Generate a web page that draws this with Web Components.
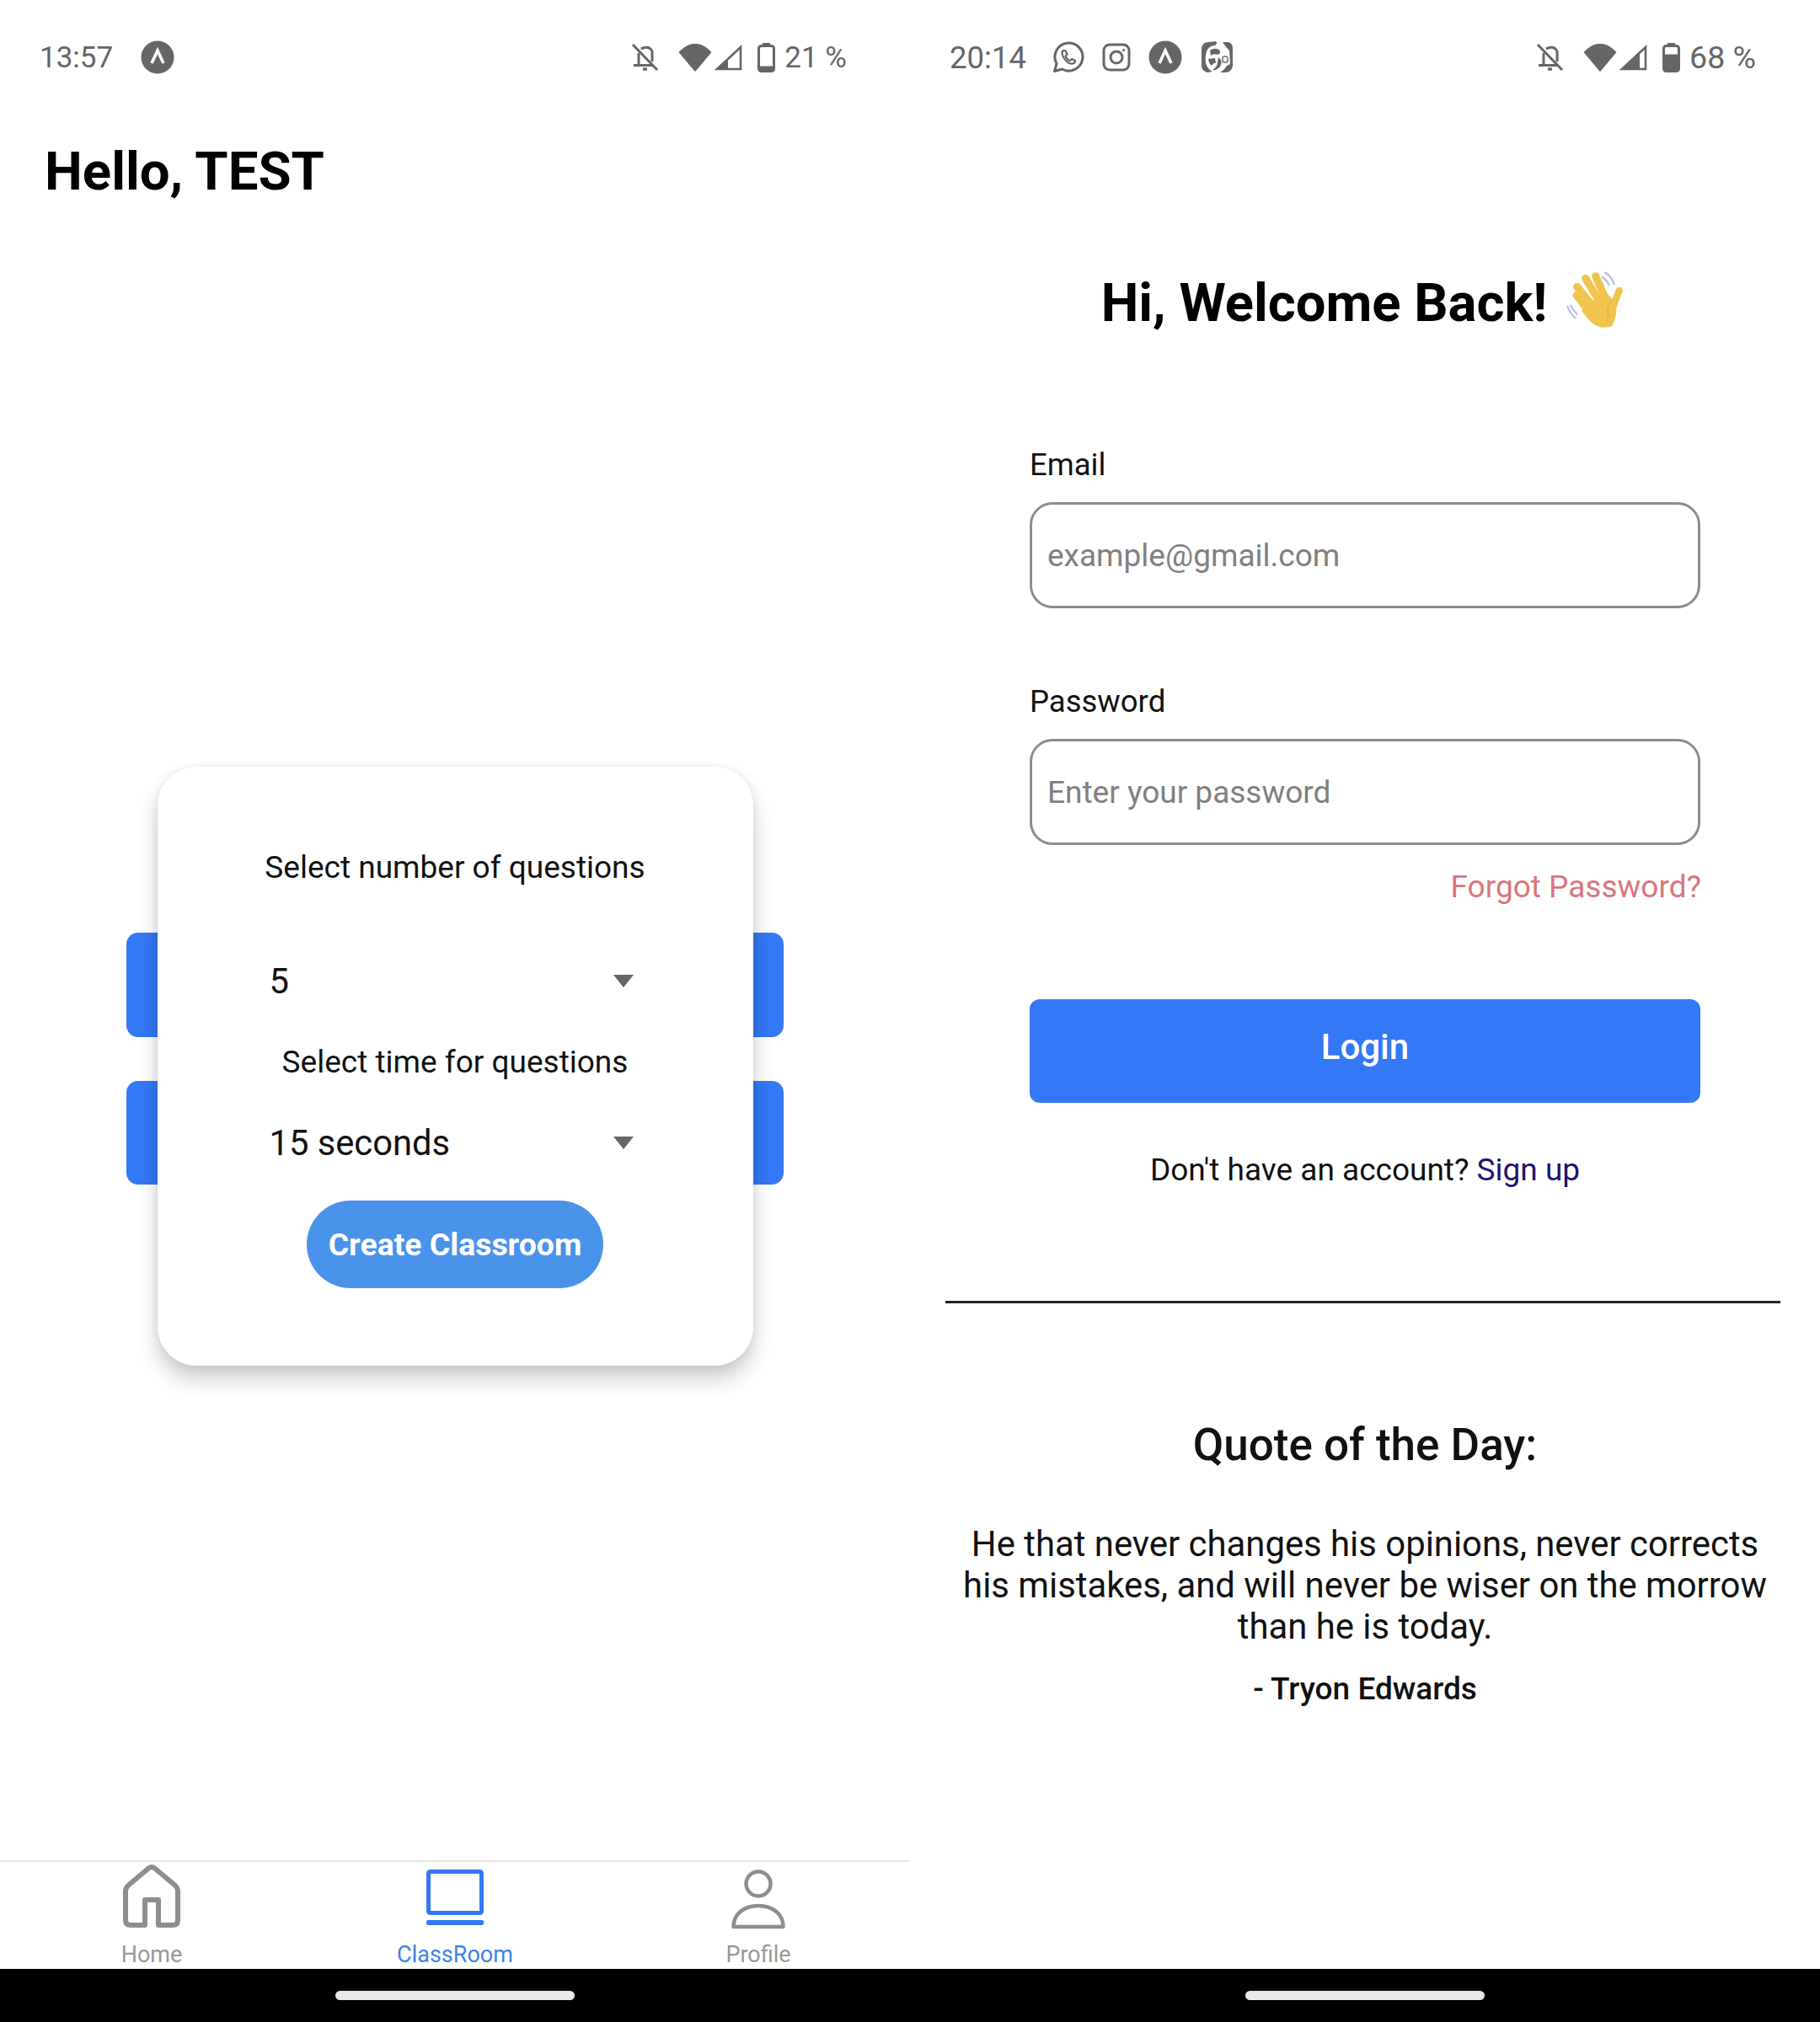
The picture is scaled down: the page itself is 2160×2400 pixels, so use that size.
<!DOCTYPE html>
<html>
<head>
<meta charset="utf-8">
<title>Classroom</title>
<style>
  html, body { margin: 0; padding: 0; background: #fff; }
  body { width: 2160px; height: 2400px; overflow: hidden; font-family: Roboto, "Liberation Sans", sans-serif; }
  .phones { display: grid; grid-template-columns: 1080px 1080px; height: 2400px; }
</style>
</head>
<body>
<div class="phones">
  <classroom-screen>
    <status-bar slot="status" time="13:57" level="21" signal="16" size="35" time-size="35" time-gap="12" edge="75">
      <notif-icon name="app"></notif-icon>
    </status-bar>
    <screen-title slot="title">Hello, TEST</screen-title>
    <nav-bar slot="tabs"></nav-bar>
  </classroom-screen>
  <login-screen>
    <status-bar slot="status" time="20:14" level="68" signal="24" size="37.5" time-size="36.5" time-gap="10" edge="76">
      <notif-icon name="whatsapp"></notif-icon>
      <notif-icon name="instagram"></notif-icon>
      <notif-icon name="app"></notif-icon>
      <notif-icon name="face"></notif-icon>
    </status-bar>
  </login-screen>
</div>

<script>
// icons for the status bar notifications
const NOTIF_ICONS = {
  app: `<svg width="40" height="40" viewBox="0 0 40 40"><circle cx="20" cy="20" r="19.5" fill="#666"/><path d="M13 27 L20 12 L27 27" fill="none" stroke="#fff" stroke-width="3.6"/></svg>`,
  whatsapp: `<svg width="38" height="38" viewBox="0 0 38 38" fill="none" stroke="#666" stroke-width="3"><path d="M2.5 35.5 L5 26.5 A16.5 16.5 0 1 1 11.5 33 Z" stroke-linejoin="round"/><path d="M12.5 11 C11 13 11 16 14 20.5 C17 25 21 27 24.5 26.5 C26.5 26 27 24.5 27 23 L23 21 L21 23 C19 22.5 16.5 20 15.5 17.5 L17.5 15.5 L15.5 11 Z" stroke-width="2.2" stroke-linejoin="round"/></svg>`,
  instagram: `<svg width="34" height="34" viewBox="0 0 34 34" fill="none" stroke="#666" stroke-width="3"><rect x="2" y="2" width="30" height="30" rx="7"/><circle cx="17" cy="17" r="7"/><circle cx="25.5" cy="8.5" r="1.6" fill="#666" stroke="none"/></svg>`,
  face: `<svg width="40" height="40" viewBox="0 0 40 40" fill="#666"><path d="M2 9 Q3 2 10 2 L19 1 Q22 4 17 6 Q10 7 8 13 Q6 19 7 27 Q9 34 15 37 L9 38 Q2 36 2 30 Z"/><path d="M12 12 Q17 8 23 11 Q26 15 21 17 Q16 15 13 18 Z"/><path d="M10 22 L18 21 L19 27 Q16 26 14 30 Q11 28 10 22 Z"/><path d="M22 20 Q28 24 24 31 Q20 36 15 35 Q21 31 21 26 Z"/><path d="M27 2 L34 2 Q39 3 39 10 L39 30 Q38 37 31 38 L24 38 Q30 34 32 30 L36 28 L35 12 Q31 8 27 2 Z"/><rect x="27" y="19" width="6" height="7" rx="2" fill="none" stroke="#666" stroke-width="1.4"/></svg>`
};

class NotifIcon extends HTMLElement {
  constructor() {
    super();
    this.attachShadow({ mode: 'open' });
    this.shadowRoot.innerHTML = `
      <style>
        :host { display: flex; align-items: center; }
        svg { display: block; }
      </style>
      ${NOTIF_ICONS[this.getAttribute('name')] || ''}
    `;
  }
}

class StatusBar extends HTMLElement {
  constructor() {
    super();
    this.attachShadow({ mode: 'open' });
    const time = this.getAttribute('time');
    const level = Number(this.getAttribute('level'));
    const signal = Number(this.getAttribute('signal'));
    const size = this.getAttribute('size');
    const timeSize = this.getAttribute('time-size');
    const timeGap = this.getAttribute('time-gap');
    const edge = this.getAttribute('edge');
    const fillHeight = Math.round(29 * level / 100);
    this.shadowRoot.innerHTML = `
      <style>
        :host {
          display: flex;
          align-items: center;
          justify-content: space-between;
          height: 136px;
          padding: 0 ${edge}px 0 47px;
          box-sizing: border-box;
          color: #666;
          font-family: Roboto, "Liberation Sans", sans-serif;
          font-size: ${size}px;
        }
        .left, .right { display: flex; align-items: center; }
        .left { gap: 21px; }
        .time { margin-right: ${timeGap}px; font-size: ${timeSize}px; }
        .bell { margin-right: 23px; }
        .wifi { margin-right: 3px; }
        .signal { margin-right: 18px; }
        .battery { margin-right: 11px; }
        svg { display: block; }
      </style>
      <div class="left">
        <span class="time">${time}</span>
        <slot></slot>
      </div>
      <div class="right">
        <svg class="bell" width="33" height="34" viewBox="0 0 33 34" fill="none" stroke="#666" stroke-width="3">
          <path d="M2 2 L31 32"/>
          <path d="M9 12 V25 M3 26.5 H25"/>
          <path d="M13 6.5 Q22 3 25 10 V21" stroke-linecap="round"/>
          <path d="M14 31 H19" stroke-width="3.4"/>
        </svg>
        <svg class="wifi" width="40" height="33" viewBox="0 0 40 33"><path d="M1.5 10 Q20 -9 38.5 10 L20 32 Z" fill="#666" stroke="#666" stroke-width="1.5" stroke-linejoin="round"/></svg>
        <svg class="signal" width="33" height="31" viewBox="0 0 33 31">
          <path d="M1 30 L${signal} ${Math.round(30 - (signal - 1) * 0.94)} V30 Z" fill="#666"/>
          <path d="M3 29 L31 3 V29 Z" fill="none" stroke="#666" stroke-width="2.6"/>
        </svg>
        <svg class="battery" width="21" height="35" viewBox="0 0 21 35">
          <rect x="6" y="0" width="9" height="4" fill="#666"/>
          <rect x="1.5" y="3.5" width="18" height="30" rx="3" fill="none" stroke="#666" stroke-width="3"/>
          <rect x="1.5" y="${33.5 - fillHeight}" width="18" height="${fillHeight}" rx="2" fill="#666"/>
        </svg>
        <span>${level} %</span>
      </div>
    `;
  }
}

class ScreenTitle extends HTMLElement {
  constructor() {
    super();
    this.attachShadow({ mode: 'open' });
    this.shadowRoot.innerHTML = `
      <style>
        :host {
          display: block;
          margin: 28px 0 0 53px;
          font-family: Roboto, "Liberation Sans", sans-serif;
          font-size: 63.5px;
          line-height: 80px;
          font-weight: 700;
          color: #000;
        }
      </style>
      <slot></slot>
    `;
  }
}

class SelectBox extends HTMLElement {
  constructor() {
    super();
    this.attachShadow({ mode: 'open' });
    this.shadowRoot.innerHTML = `
      <style>
        :host {
          display: flex;
          align-items: center;
          justify-content: space-between;
          align-self: stretch;
          height: 60px;
          padding: 0 142px 0 133px;
          font-size: 41.7px;
          color: #111;
        }
        .arrow { width: 0; height: 0; border: solid transparent; border-width: 15px 12.5px 0; border-top-color: #666; }
      </style>
      <span><slot></slot></span>
      <span class="arrow"></span>
    `;
  }
}

class ClassroomModal extends HTMLElement {
  constructor() {
    super();
    this.attachShadow({ mode: 'open' });
    this.shadowRoot.innerHTML = `
      <style>
        :host {
          position: absolute;
          left: 186.5px;
          top: 910px;
          width: 707px;
          height: 711px;
          box-sizing: border-box;
          display: flex;
          flex-direction: column;
          align-items: center;
          padding-top: 98px;
          background: #fff;
          border-radius: 46px;
          box-shadow: 0 16px 26px rgba(0, 0, 0, 0.2), 0 0 10px rgba(0, 0, 0, 0.07);
          font-family: Roboto, "Liberation Sans", sans-serif;
        }
        .label { font-size: 37px; line-height: 44px; color: #111; }
        .first { margin-top: 82px; }
        .label.second { margin-top: 45px; }
        select-box.second { margin-top: 43px; }
        .create {
          margin-top: 39px;
          width: 352px;
          height: 104px;
          border-radius: 52px;
          background: #4a93ea;
          color: #fff;
          font-size: 37.4px;
          font-weight: 700;
          display: flex;
          align-items: center;
          justify-content: center;
        }
      </style>
      <div class="label">Select number of questions</div>
      <select-box class="first">5</select-box>
      <div class="label second">Select time for questions</div>
      <select-box class="second">15 seconds</select-box>
      <div class="create">Create Classroom</div>
    `;
  }
}

class NavBar extends HTMLElement {
  constructor() {
    super();
    this.attachShadow({ mode: 'open' });
    this.shadowRoot.innerHTML = `
      <style>
        :host {
          display: grid;
          grid-template-columns: repeat(3, 1fr);
          height: 129px;
          box-sizing: border-box;
          border-top: 2px solid #e8e8e8;
          padding-top: 2px;
          font-family: Roboto, "Liberation Sans", sans-serif;
          font-size: 27px;
          color: #999;
        }
        .tab { display: flex; flex-direction: column; align-items: center; }
        .tab span { line-height: 32px; margin-top: 12px; }
        .active { color: #3f82e8; }
        svg { display: block; }
      </style>
      <div class="tab">
        <svg width="70" height="80" viewBox="0 0 70 80" fill="none" stroke="#8e8e8e" stroke-width="6" stroke-linejoin="round">
          <path d="M27 73 H10 Q4 73 4 67 V33 Q4 29 7 26 L32 5 Q35 3 38 5 L63 26 Q66 29 66 33 V67 Q66 73 60 73 H43 V43 H27 Z"/>
        </svg>
        <span>Home</span>
      </div>
      <div class="tab active">
        <svg width="70" height="80" viewBox="0 0 70 80" fill="none">
          <rect x="3.5" y="9.5" width="63" height="49" rx="2" stroke="#3478f6" stroke-width="5"/>
          <rect x="1" y="67" width="68" height="6" rx="2" fill="#3478f6"/>
        </svg>
        <span>ClassRoom</span>
      </div>
      <div class="tab">
        <svg width="70" height="80" viewBox="0 0 70 80" fill="none" stroke="#8e8e8e" stroke-width="4.5" stroke-linejoin="round">
          <circle cx="35" cy="24" r="14.5"/>
          <path d="M5.5 75 C5.5 59 19 50 35 50 C51 50 64.5 59 64.5 75 Z"/>
        </svg>
        <span>Profile</span>
      </div>
    `;
  }
}

class HomeIndicator extends HTMLElement {
  constructor() {
    super();
    this.attachShadow({ mode: 'open' });
    this.shadowRoot.innerHTML = `
      <style>
        :host {
          display: flex;
          justify-content: center;
          height: 63px;
          padding-top: 26px;
          box-sizing: border-box;
          background: #000;
        }
        div { width: 284px; height: 11px; border-radius: 6px; background: #e8e8e8; }
      </style>
      <div></div>
    `;
  }
}

class ClassroomScreen extends HTMLElement {
  constructor() {
    super();
    this.attachShadow({ mode: 'open' });
    this.shadowRoot.innerHTML = `
      <style>
        :host {
          position: relative;
          display: flex;
          flex-direction: column;
          height: 2400px;
          background: #fff;
        }
        .actions {
          display: flex;
          flex-direction: column;
          gap: 52px;
          margin: 863px 150px 0;
        }
        .actions div { height: 124px; border-radius: 14px; background: #3478f6; }
        .actions div + div { height: 123px; }
        .spacer { flex: 1; }
      </style>
      <slot name="status"></slot>
      <slot name="title"></slot>
      <div class="actions"><div></div><div></div></div>
      <classroom-modal></classroom-modal>
      <div class="spacer"></div>
      <slot name="tabs"></slot>
      <home-indicator></home-indicator>
    `;
  }
}

class FormField extends HTMLElement {
  constructor() {
    super();
    this.attachShadow({ mode: 'open' });
    this.shadowRoot.innerHTML = `
      <style>
        :host { display: block; }
        label { display: block; font-size: 36.5px; line-height: 44px; color: #111; margin-bottom: 22px; }
        .input {
          height: 126px;
          box-sizing: border-box;
          border: 3px solid #8c8c8c;
          border-radius: 27px;
          padding-left: 18px;
          display: flex;
          align-items: center;
          font-size: 37px;
          color: #808080;
        }
      </style>
      <label>${this.getAttribute('label')}</label>
      <div class="input"><slot></slot></div>
    `;
  }
}

class LoginScreen extends HTMLElement {
  constructor() {
    super();
    this.attachShadow({ mode: 'open' });
    this.shadowRoot.innerHTML = `
      <style>
        :host {
          display: flex;
          flex-direction: column;
          height: 2400px;
          background: #fff;
          font-family: Roboto, "Liberation Sans", sans-serif;
          color: #000;
        }
        h1 {
          margin: 183px 0 0;
          height: 80px;
          display: flex;
          justify-content: center;
          align-items: center;
          gap: 13px;
          font-size: 63.3px;
          font-weight: 700;
          line-height: 80px;
          padding-left: 6px;
        }
        h1 svg { display: block; margin: -2px 0 0; }
        .form { width: 796px; margin: 131px auto 0; display: flex; flex-direction: column; }
        .form form-field + form-field { margin-top: 89px; }
        .forgot { margin-top: 28px; text-align: right; font-size: 37px; line-height: 44px; color: #d9767a; margin-right: -1px; }
        .login {
          margin-top: 111px;
          height: 123px;
          padding-bottom: 10px;
          box-sizing: border-box;
          border-radius: 12px;
          background: #3478f6;
          color: #fff;
          font-size: 42px;
          font-weight: 500;
          display: flex;
          align-items: center;
          justify-content: center;
        }
        .signup { margin-top: 58px; text-align: center; font-size: 37px; line-height: 44px; color: #111; }
        .signup span { color: #1f1470; }
        hr { margin: 133px 47px 0 42px; height: 3px; border: 0; background: #222; }
        h2 { margin: 138px 0 0; font-size: 53px; line-height: 60px; font-weight: 500; text-align: center; color: #111; }
        .quote { margin: 63px 0 0; padding: 0 50px; font-size: 41.85px; line-height: 49px; text-align: center; color: #111; }
        .author { margin-top: 28px; font-size: 37px; line-height: 44px; font-weight: 500; text-align: center; color: #111; }
      </style>
      <slot name="status"></slot>
      <h1>
        <span>Hi, Welcome Back!</span>
        <svg width="90" height="90" viewBox="0 0 270 270" role="img" aria-label="waving hand">
          <g fill="none" stroke-linecap="round">
            <path d="M168 32 Q188 42 200 72 M158 48 Q172 56 182 76" stroke="#b9c4d6" stroke-width="7"/>
            <path d="M34 152 Q42 176 62 194 M46 148 Q52 164 68 180" stroke="#b9c4d6" stroke-width="7"/>
            <g stroke="#f0c44c" stroke-width="27">
              <path d="M66 112 L112 172"/>
              <path d="M68 82 L125 152"/>
              <path d="M98 52 L146 132"/>
              <path d="M134 44 L168 122"/>
            </g>
            <path d="M218 96 L196 152" stroke="#f0c44c" stroke-width="25"/>
          </g>
          <path d="M92 150 L172 104 L208 138 Q212 190 192 222 Q150 238 116 206 L84 168 Z" fill="#f0c44c"/>
          <path d="M192 130 Q172 150 178 176 Q180 192 172 204" fill="none" stroke="#d8a93c" stroke-width="3"/>
        </svg>
      </h1>
      <div class="form">
        <form-field label="Email">example@gmail.com</form-field>
        <form-field label="Password">Enter your password</form-field>
        <div class="forgot">Forgot Password?</div>
        <div class="login">Login</div>
        <div class="signup">Don't have an account? <span>Sign up</span></div>
      </div>
      <hr>
      <h2>Quote of the Day:</h2>
      <p class="quote">He that never changes his opinions, never corrects his mistakes, and will never be wiser on the morrow than he is today.</p>
      <div class="author">- Tryon Edwards</div>
      <div style="flex:1"></div>
      <home-indicator></home-indicator>
    `;
  }
}

customElements.define('notif-icon', NotifIcon);
customElements.define('status-bar', StatusBar);
customElements.define('screen-title', ScreenTitle);
customElements.define('select-box', SelectBox);
customElements.define('classroom-modal', ClassroomModal);
customElements.define('nav-bar', NavBar);
customElements.define('home-indicator', HomeIndicator);
customElements.define('classroom-screen', ClassroomScreen);
customElements.define('form-field', FormField);
customElements.define('login-screen', LoginScreen);
</script>
</body>
</html>
